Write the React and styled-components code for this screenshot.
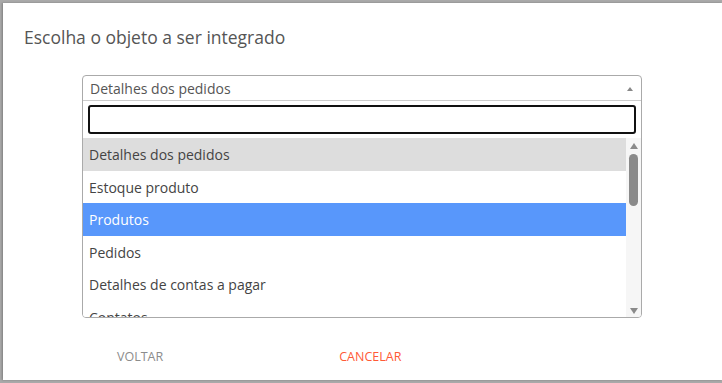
import React from "react";
import styled, { createGlobalStyle } from "styled-components";

const Global = createGlobalStyle`
  html, body {
    margin: 0;
    padding: 0;
    background: #a9a9a9;
    font-family: "Open Sans", "Noto Sans", sans-serif;
  }
  * { box-sizing: border-box; }
`;

const Backdrop = styled.div`
  width: 722px;
  height: 383px;
  padding: 3px 0 3px 3px;
  overflow: hidden;
`;

const Modal = styled.div`
  width: 719px;
  height: 377px;
  background: #fff;
  box-shadow: -1px 0 2px rgba(0, 0, 0, 0.25);
  padding: 21px 0 0 21px;
  display: flex;
  flex-direction: column;
`;

const Title = styled.h2`
  margin: 0;
  font-size: 17.5px;
  line-height: 26px;
  font-weight: 400;
  color: #555;
`;

const Select = styled.div`
  margin: 25px 0 0 58px;
  width: 560px;
  height: 243px;
  border: 1px solid #aaa;
  border-radius: 4px;
  display: flex;
  flex-direction: column;
  overflow: hidden;
`;

const Header = styled.div`
  height: 25px;
  display: flex;
  align-items: center;
  justify-content: space-between;
  padding: 1px 8px 0 7px;
  border-bottom: 1px solid #ccc;
  font-size: 14px;
  color: #555;
`;

const Caret = styled.span`
  width: 0;
  height: 0;
  border-left: 3px solid transparent;
  border-right: 3px solid transparent;
  border-bottom: 4px solid #888;
`;

const SearchWrap = styled.div`
  padding: 4px 5px 4px 5px;
`;

const Search = styled.input`
  display: block;
  width: 100%;
  height: 29px;
  border: 2px solid #111;
  border-radius: 3px;
  outline: none;
  font: inherit;
  font-size: 14px;
`;

const Body = styled.div`
  flex: 1;
  display: flex;
  min-height: 0;
`;

const List = styled.div`
  flex: 1;
  overflow: hidden;
`;

const Option = styled.div`
  height: 32.5px;
  display: flex;
  align-items: center;
  padding: 1px 0 0 6px;
  font-size: 14px;
  color: ${(p) => (p.$active ? "#fff" : "#444")};
  background: ${(p) => (p.$active ? "#5897fb" : p.$selected ? "#ddd" : "#fff")};
  white-space: nowrap;
`;

const Scrollbar = styled.div`
  width: 15px;
  background: #f6f6f6;
  display: flex;
  flex-direction: column;
  align-items: center;
  padding: 5px 0 3px;
`;

const Arrow = styled.span`
  width: 0;
  height: 0;
  border-left: 4px solid transparent;
  border-right: 4px solid transparent;
  ${(p) =>
    p.$down ? "border-top: 6px solid #8a8a8a;" : "border-bottom: 6px solid #8a8a8a;"}
`;

const Thumb = styled.div`
  width: 9px;
  height: 52px;
  margin-top: 5px;
  border-radius: 5px;
  background: #8a8a8a;
`;

const Spacer = styled.div`
  flex: 1;
`;

const Footer = styled.div`
  display: flex;
  gap: 176px;
  padding: 31px 0 0 93px;
`;

const Button = styled.button`
  border: none;
  background: none;
  padding: 0;
  font: inherit;
  font-size: 12.5px;
  line-height: 16px;
  text-transform: uppercase;
  color: ${(p) => p.$color};
  cursor: pointer;
`;

const options = [
  "Detalhes dos pedidos",
  "Estoque produto",
  "Produtos",
  "Pedidos",
  "Detalhes de contas a pagar",
  "Contatos",
];

export default function App() {
  return (
    <>
      <Global />
      <Backdrop>
        <Modal>
          <Title>Escolha o objeto a ser integrado</Title>
          <Select>
            <Header>
              <span>Detalhes dos pedidos</span>
              <Caret />
            </Header>
            <SearchWrap>
              <Search />
            </SearchWrap>
            <Body>
              <List>
                {options.map((o, i) => (
                  <Option key={o} $selected={i === 0} $active={i === 2}>
                    {o}
                  </Option>
                ))}
              </List>
              <Scrollbar>
                <Arrow />
                <Thumb />
                <Spacer />
                <Arrow $down />
              </Scrollbar>
            </Body>
          </Select>
          <Footer>
            <Button $color="#8c8c8c">Voltar</Button>
            <Button $color="#ff5a36">Cancelar</Button>
          </Footer>
        </Modal>
      </Backdrop>
    </>
  );
}
